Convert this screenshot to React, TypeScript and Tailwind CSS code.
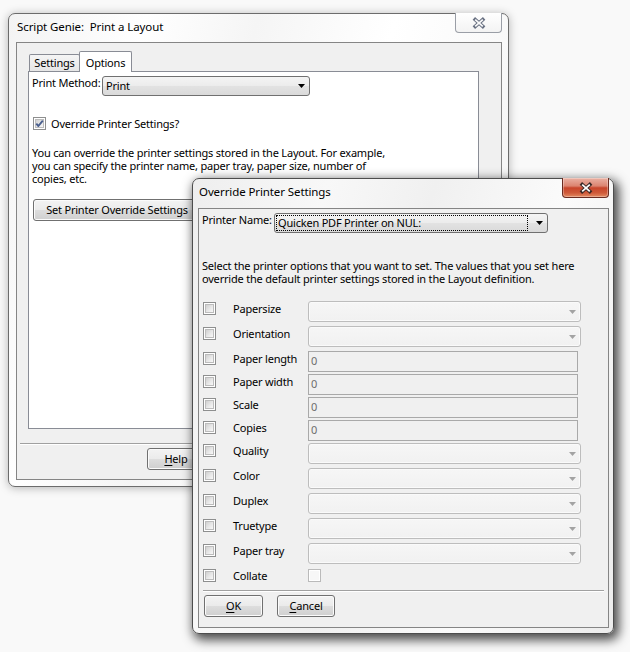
import React from "react";

type FieldKind = "combo" | "text" | "check";

interface OptionRow {
  label: string;
  kind: FieldKind;
  height: string;
}

const optionRows: OptionRow[] = [
  { label: "Papersize", kind: "combo", height: "h-[25px]" },
  { label: "Orientation", kind: "combo", height: "h-[25px]" },
  { label: "Paper length", kind: "text", height: "h-[23px]" },
  { label: "Paper width", kind: "text", height: "h-[23px]" },
  { label: "Scale", kind: "text", height: "h-[23px]" },
  { label: "Copies", kind: "text", height: "h-[23px]" },
  { label: "Quality", kind: "combo", height: "h-[25px]" },
  { label: "Color", kind: "combo", height: "h-[25px]" },
  { label: "Duplex", kind: "combo", height: "h-[25px]" },
  { label: "Truetype", kind: "combo", height: "h-[25px]" },
  { label: "Paper tray", kind: "combo", height: "h-[25px]" },
  { label: "Collate", kind: "check", height: "h-[22px]" },
];

function CloseGlyph({ active }: { active: boolean }) {
  const outline = active ? "#3b2a27" : "#687082";
  const fill = active ? "#ffffff" : "#fafafa";
  return (
    <svg width="12" height="10" viewBox="0 0 12 10" className="overflow-visible">
      <path d="M2.2 1.6 L9.8 8.4 M9.8 1.6 L2.2 8.4" stroke={outline} strokeWidth="3.6" strokeLinecap="square" fill="none" />
      <path d="M2.2 1.6 L9.8 8.4 M9.8 1.6 L2.2 8.4" stroke={fill} strokeWidth="1.7" strokeLinecap="butt" fill="none" />
    </svg>
  );
}

function CloseButton({ active }: { active: boolean }) {
  if (active) {
    return (
      <div className="absolute right-[4px] top-[-1px] flex h-[20px] w-[47px] items-center justify-center rounded-b-[4px] border border-t-0 border-[#6a2b20] bg-[linear-gradient(#eab1a3_0%,#dc8470_42%,#c8452b_52%,#cf5a39_78%,#e38b62_100%)] shadow-[inset_0_0_0_1px_rgba(255,255,255,0.3)]">
        <CloseGlyph active />
      </div>
    );
  }
  return (
    <div className="absolute right-[6px] top-[-1px] flex h-[20px] w-[47px] items-center justify-center rounded-b-[4px] border border-t-0 border-[#9a9ea6] bg-[linear-gradient(#ffffff,#f3f3f3)]">
      <CloseGlyph active={false} />
    </div>
  );
}

function Checkbox({ checked = false, className = "" }: { checked?: boolean; className?: string }) {
  return (
    <div className={`relative flex h-[13px] w-[13px] shrink-0 items-center justify-center border border-[#8e8f8f] bg-white ${className}`}>
      <div className="h-[9px] w-[9px] border border-[#bcbcbc] bg-[linear-gradient(135deg,#d0d0d0_0%,#e8e8e8_55%,#f8f8f8_100%)]" />
      {checked && (
        <svg width="11" height="11" viewBox="0 0 11 11" className="absolute left-[0px] top-[0px]">
          <path d="M2.3 5.6 L4.4 8 L8.8 2.6" stroke="#4a5f8e" strokeWidth="1.9" fill="none" strokeLinejoin="round" />
        </svg>
      )}
    </div>
  );
}

function ArrowDown({ color }: { color: string }) {
  return (
    <svg width="7" height="4" viewBox="0 0 7 4" className="shrink-0">
      <polygon points="0,0 7,0 3.5,4" fill={color} />
    </svg>
  );
}

function DisabledCombo() {
  return (
    <div className="flex h-[21px] w-[273px] items-center justify-end rounded-[3px] border border-[#bdbdbd] bg-[linear-gradient(#f6f6f6,#f1f1f1)] pr-[4px] shadow-[inset_0_0_0_1px_#fafafa]">
      <ArrowDown color="#a3a3a3" />
    </div>
  );
}

function DisabledText() {
  return (
    <div className="flex h-[21px] w-[270px] items-center border border-[#a9a9a9] bg-[#f0f0f0] pl-[2px] text-[#6d6d6d]">
      0
    </div>
  );
}

function Win7Button({ className = "", children }: { className?: string; children: React.ReactNode }) {
  return (
    <div
      className={`flex h-[22px] items-center justify-center rounded-[3px] border border-[#707070] bg-[linear-gradient(#f3f3f3_0%,#ebebeb_48%,#dddddd_52%,#cfcfcf_100%)] shadow-[inset_0_0_0_1px_#fbfbfb] ${className}`}
    >
      {children}
    </div>
  );
}

function ScriptGenieWindow() {
  return (
    <div className="absolute left-[8px] top-[13px] flex h-[474px] w-[501px] flex-col rounded-[7px] border border-[#6c6c6c] bg-[linear-gradient(105deg,#f3f3f3_0%,#ffffff_22%,#f5f5f5_40%,#ffffff_62%,#f2f2f2_100%)] shadow-[0_1px_10px_rgba(0,0,0,0.28)]">
      <div className="flex h-[28px] items-center pb-[2px] pl-[8px] text-[11.5px] tracking-[-0.1px]">
        Script Genie:&nbsp; Print a Layout
      </div>
      <CloseButton active={false} />

      <div className="mb-[6px] ml-[7px] mr-[6px] flex flex-1 flex-col border border-[#858585] bg-[#f0f0f0]">
        {/* tab strip */}
        <div className="flex h-[28px] items-end pl-[11px]">
          <div className="ml-[1px] flex h-[17px] w-[51px] items-center justify-center rounded-t-[2px] border border-b-0 border-[#898c95] bg-[linear-gradient(#f5f5f5,#e6e6e6)] pt-[1px]">
            Settings
          </div>
          <div className="relative z-10 -mb-px ml-[-1px] flex h-[21px] w-[53px] items-start justify-center rounded-t-[2px] border border-b-0 border-[#898c95] bg-white pt-[3px]">
            Options
          </div>
        </div>

        {/* Options page */}
        <div className="ml-[11px] flex h-[358px] w-[451px] flex-col border border-[#898c95] bg-white pl-[3px] pt-[4px]">
          <div className="flex items-start">
            <span className="w-[70px] leading-[13px]">Print Method:</span>
            <div className="flex h-[20px] w-[208px] items-center justify-between rounded-[3px] border border-[#707070] bg-[linear-gradient(#f4f4f4_0%,#ececec_48%,#e2e2e2_52%,#dadada_100%)] pl-[3px] pr-[4px]">
              <span className="pt-[1px]">Print</span>
              <ArrowDown color="#000000" />
            </div>
          </div>

          <div className="mt-[21px] flex items-start">
            <Checkbox checked className="ml-[1px]" />
            <span className="ml-[5px] leading-[13px]">Override Printer Settings?</span>
          </div>

          <p className="mt-[16px] leading-[13px]">
            You can override the printer settings stored in the Layout. For example,
            <br />
            you can specify the printer name, paper tray, paper size, number of
            <br />
            copies, etc.
          </p>

          <Win7Button className="ml-[1px] mt-[14px] w-[168px]">Set Printer Override Settings</Win7Button>
        </div>

        <div className="ml-[3px] mr-[3px] mt-[14px] h-[2px] border-b border-t border-b-white border-t-[#a0a0a0]" />

        <Win7Button className="ml-[130px] mt-[3px] w-[58px]">
          <span>
            <span className="underline underline-offset-2">H</span>elp
          </span>
        </Win7Button>
      </div>
    </div>
  );
}

function OverrideWindow() {
  return (
    <div className="absolute left-[192px] top-[178px] flex h-[456px] w-[422px] flex-col rounded-[7px] border border-[#4d4d4d] bg-[linear-gradient(105deg,#eeeeee_0%,#f8f8f8_25%,#f0f0f0_45%,#fbfbfb_70%,#ececec_100%)] shadow-[3px_4px_11px_2px_rgba(0,0,0,0.7)]">
      <div className="flex h-[29px] items-center pb-[3px] pl-[6px] text-[11.5px] tracking-[-0.1px]">
        Override Printer Settings
      </div>
      <CloseButton active />

      <div className="mb-[5px] ml-[5px] mr-[4px] flex flex-1 flex-col border border-[#858585] bg-[#f0f0f0] pl-[3px] pt-[4px]">
        <div className="flex items-start">
          <span className="w-[72px] leading-[13px]">Printer Name:</span>
          <div className="flex h-[20px] w-[274px] items-center rounded-[3px] border border-[#707070] bg-[linear-gradient(#f4f4f4_0%,#ececec_48%,#e2e2e2_52%,#dadada_100%)] pl-[1px] pr-[4px]">
            <div className="flex h-[16px] w-[252px] items-center border border-dotted border-black pl-[1px]">
              Quicken PDF Printer on NUL:
            </div>
            <div className="flex flex-1 justify-end">
              <ArrowDown color="#000000" />
            </div>
          </div>
        </div>

        <p className="mt-[26px] leading-[13px]">
          Select the printer options that you want to set. The values that you set here
          <br />
          override the default printer settings stored in the Layout definition.
        </p>

        <div className="mt-[16px] flex flex-col">
          {optionRows.map((row) => (
            <div key={row.label} className={`flex items-start ${row.height}`}>
              <Checkbox className="ml-[1px] mt-[1px]" />
              <span className="ml-[17px] mt-[1px] w-[75px] leading-[13px]">{row.label}</span>
              {row.kind === "combo" && <DisabledCombo />}
              {row.kind === "text" && <DisabledText />}
              {row.kind === "check" && (
                <div className="mt-[1px] h-[13px] w-[13px] border border-[#bababa] bg-[#f7f7f7] shadow-[inset_0_0_0_1px_#ffffff]" />
              )}
            </div>
          ))}
        </div>

        <div className="ml-[1px] h-[2px] w-[401px] border-b border-t border-b-white border-t-[#a0a0a0]" />

        <div className="ml-[2px] mt-[3px] flex gap-[14px]">
          <Win7Button className="w-[59px]">
            <span>
              <span className="underline underline-offset-2">O</span>K
            </span>
          </Win7Button>
          <Win7Button className="w-[58px]">
            <span>
              <span className="underline underline-offset-2">C</span>ancel
            </span>
          </Win7Button>
        </div>
      </div>
    </div>
  );
}

export default function App() {
  return (
    <div className="relative h-[652px] w-[630px] overflow-hidden bg-[#f9f9f9] text-[11px] tracking-[-0.2px] text-black [font-family:'Noto_Sans',sans-serif]">
      <ScriptGenieWindow />
      <OverrideWindow />
    </div>
  );
}
